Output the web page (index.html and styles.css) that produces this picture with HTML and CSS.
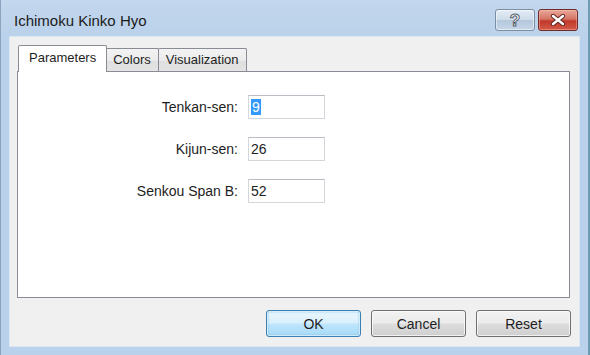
FILE: index.html
```html
<!DOCTYPE html>
<html lang="en">
<head>
    <meta charset="UTF-8">
    <title>Ichimoku Kinko Hyo</title>
    <link rel="stylesheet" href="styles.css">
</head>
<body>
    <div class="window">
        <div class="title-bar">
            <span class="title">Ichimoku Kinko Hyo</span>
            <div class="title-buttons">
                <div class="cap-btn help-btn"><span class="help-glyph">?</span></div>
                <div class="cap-btn close-btn">
                    <svg width="16" height="12" viewBox="0 0 16 12">
                        <path d="M3 2 L13 10 M13 2 L3 10" stroke="#5a2420" stroke-width="4.2" stroke-linecap="round"/>
                        <path d="M3 2 L13 10 M13 2 L3 10" stroke="#ffffff" stroke-width="2.4" stroke-linecap="round"/>
                    </svg>
                </div>
            </div>
        </div>

        <div class="client">
            <div class="tabs">
                <div class="tab active">Parameters</div>
                <div class="tab">Colors</div>
                <div class="tab">Visualization</div>
            </div>

            <div class="panel">
                <div class="form">
                    <label class="field-label">Tenkan-sen:</label>
                    <div class="text-box"><span class="selected">9</span></div>

                    <label class="field-label">Kijun-sen:</label>
                    <div class="text-box">26</div>

                    <label class="field-label">Senkou Span B:</label>
                    <div class="text-box">52</div>
                </div>
            </div>

            <div class="actions">
                <div class="btn default">OK</div>
                <div class="btn">Cancel</div>
                <div class="btn">Reset</div>
            </div>
        </div>
    </div>
</body>
</html>
```

FILE: styles.css
```css
* {
    margin: 0;
    padding: 0;
    box-sizing: border-box;
    font-family: 'Liberation Sans', Arial, sans-serif;
}

body {
    width: 590px;
    height: 355px;
    overflow: hidden;
    color: #1e1e1e;
}

.window {
    width: 590px;
    height: 355px;
    display: flex;
    flex-direction: column;
    background: linear-gradient(180deg, #c3d7ed 0%, #b9d1ea 40px, #b9d1ea 100%);
    border-left: 1px solid #8aa3bf;
    border-right: 2px solid #6f9bb3;
}

.title-bar {
    height: 36px;
    display: flex;
    align-items: center;
    justify-content: space-between;
    padding: 4px 10px 0 13px;
}

.title {
    font-size: 15px;
    color: #1b1b1b;
}

.title-buttons {
    display: flex;
    gap: 3px;
}

.cap-btn {
    width: 40px;
    height: 22px;
    border-radius: 3px;
    display: flex;
    align-items: center;
    justify-content: center;
}

.help-btn {
    border: 1px solid #7d8ea3;
    background: linear-gradient(180deg, #e3ecf6 0%, #cfdcea 48%, #b4c7dc 52%, #c6d6e8 100%);
    box-shadow: inset 0 0 0 1px rgba(255, 255, 255, 0.5);
}

.help-glyph {
    font-size: 17px;
    font-weight: bold;
    color: #ffffff;
    -webkit-text-stroke: 1px #56606c;
    line-height: 1;
}

.close-btn {
    border: 1px solid #6e2b27;
    background: linear-gradient(180deg, #e9a899 0%, #d57565 45%, #c0392b 55%, #d45a48 100%);
    box-shadow: inset 0 0 0 1px rgba(255, 200, 190, 0.4);
}

.client {
    flex: 1;
    margin: 0 8px 8px 8px;
    background: #f0f0f0;
    border: 1px solid #dce7f3;
    display: flex;
    flex-direction: column;
    padding: 8px 8px 9px 7px;
}

.tabs {
    display: flex;
    align-items: flex-end;
    padding-left: 1px;
    margin-bottom: -1px;
    height: 27px;
}

.tab {
    height: 24px;
    padding: 3px 7px 0 7px;
    font-size: 13px;
    color: #1e1e1e;
    border: 1px solid #898c95;
    border-bottom: none;
    margin-left: -1px;
    border-radius: 2px 2px 0 0;
    background: linear-gradient(180deg, #f3f3f3 0%, #ebebeb 50%, #dedede 51%, #e5e5e5 100%);
}

.tab:first-child {
    margin-left: 0;
}

.tab.active {
    position: relative;
    z-index: 1;
    height: 27px;
    padding: 4px 10px 0 10px;
    background: #ffffff;
    margin-right: -1px;
}

.panel {
    height: 227px;
    width: 553px;
    background: #ffffff;
    border: 1px solid #898c95;
}

.form {
    display: grid;
    grid-template-columns: 220px 77px;
    column-gap: 10px;
    row-gap: 18px;
    padding-top: 23px;
    align-items: center;
}

.field-label {
    font-size: 14px;
    text-align: right;
    color: #1e1e1e;
}

.text-box {
    height: 24px;
    border: 1px solid #d3d6db;
    border-top-color: #b9bcc2;
    font-size: 14px;
    line-height: 22px;
    padding-left: 2px;
    color: #1e1e1e;
}

.selected {
    background: #3399ff;
    color: #ffffff;
    padding: 0 1px;
}

.actions {
    display: flex;
    justify-content: flex-end;
    gap: 10px;
    margin-top: 12px;
}

.btn {
    width: 95px;
    height: 27px;
    border: 1px solid #707070;
    border-radius: 3px;
    font-size: 14px;
    display: flex;
    align-items: center;
    justify-content: center;
    color: #1e1e1e;
    background: linear-gradient(180deg, #f2f2f2 0%, #ebebeb 48%, #dddddd 52%, #cfcfcf 100%);
    box-shadow: inset 0 0 0 1px rgba(255, 255, 255, 0.7);
}

.btn.default {
    border-color: #3c7fb1;
    background: linear-gradient(180deg, #eaf6fd 0%, #d9f0fc 48%, #bee6fd 52%, #a7d9f5 100%);
    box-shadow: inset 0 0 0 1px rgba(255, 255, 255, 0.6), inset 0 0 2px 1px #7ec4ec;
}
```
